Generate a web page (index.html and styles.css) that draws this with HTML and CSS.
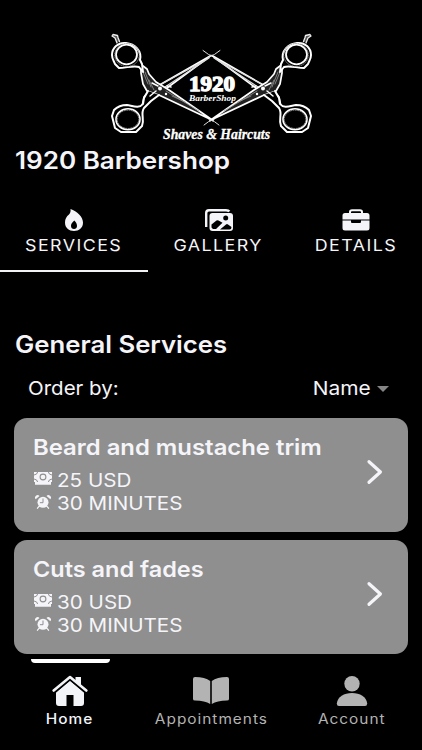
FILE: index.html
```
<!DOCTYPE html>
<html lang="en">
<head>
<meta charset="utf-8">
<meta name="viewport" content="width=device-width, initial-scale=1">
<title>1920 Barbershop</title>
<link rel="stylesheet" href="styles.css">
</head>
<body>
<svg class="defs" width="0" height="0" aria-hidden="true">
  <symbol id="cash" viewBox="0 0 18 13">
    <path fill="currentColor" d="M0 0h18v10H0zM1 10h16v2.800H1z"/>
    <g fill="none" stroke="#8f8f8f"><path d="M3.600 0Q3.300 2.600 0 3M14.400 0Q14.700 2.600 18 3M3.600 10Q3.300 7.400 0 7M14.400 10Q14.700 7.400 18 7" stroke-width="1"/><circle cx="9" cy="5" r="2.900" stroke-width="1.100"/></g>
  </symbol>
  <symbol id="clock" viewBox="0 0 16 14">
    <circle cx="8" cy="7.300" r="5.500" fill="currentColor"/>
    <path d="M.6 4.200A2.300 2.300 0 0 1 4.500 1.100zM15.400 4.200A2.300 2.300 0 0 0 11.500 1.100z" fill="currentColor"/>
    <path d="M4.200 11.200l-1.700 2M11.800 11.200l1.700 2" stroke="currentColor" stroke-width="1.300" stroke-linecap="round"/>
    <path d="M8 3.500v4.200H4.900" fill="none" stroke="#8f8f8f" stroke-width="1"/>
  </symbol>
  <symbol id="chevron" viewBox="0 0 16 24">
    <path d="M2.500 2.500 13 12 2.500 21.500" fill="none" stroke="currentColor" stroke-width="3" stroke-linecap="round" stroke-linejoin="round"/>
  </symbol>
</svg>

<header class="header">
  <svg class="logo" viewBox="100 25 223 120" role="img" aria-label="1920 Barber Shop">
    <defs>
      <g id="scissors" stroke-linejoin="round" stroke-linecap="round">
        <path d="M117 43l-2-5-3-2 1-1.500 4.500 1 .5 2 1.500 4" fill="#555" stroke="#eee" stroke-width="1.300"/>
        <path d="M144 97 149 91 211 55.500 152 99 145 105 141 111Z" fill="#000" stroke="#fff" stroke-width="1.600"/>
        <path d="M151 91 160 85 209 58 165 87" fill="none" stroke="#ddd" stroke-width="1.200"/>
        <path d="M141 64.500 147 69 149 74 156 82 169 90 213 120.500 160 95.500 147 91 143 84 141 73Z" fill="#222" stroke="#fff" stroke-width="1.700"/>
        <path d="M143 72l5 12M145 72l6 15M149 80l5 10M166 91l33 20M172 96l13 6" stroke="#999" stroke-width=".8"/>
        <path d="M126 43c-8-1-14 5-14 12 0 4 2 6 3 9l4 4c7 0 15-3 20-1l4 5-1-8-2-4c2-9-5-16-14-17z" fill="#000" stroke="#fff" stroke-width="2"/>
        <ellipse cx="126.500" cy="54.500" rx="10.500" ry="9.800" fill="#000" stroke="#fff" stroke-width="1.800"/>
        <ellipse cx="127" cy="55" rx="12.300" ry="11.500" fill="none" stroke="#999" stroke-width=".9" stroke-dasharray="1 1.400"/>
        <path d="M148 91 144 98 143 104C139 109 133 106 127 105c-6 0-10 2-13 5l-2 6 3 12 6 4h15l6-6c3-7-2-12 2-18l7-7 8-6" fill="#000" stroke="#fff" stroke-width="2"/>
        <ellipse cx="128" cy="119.300" rx="12" ry="10.500" fill="none" stroke="#fff" stroke-width="1.600"/>
        <ellipse cx="128" cy="119.300" rx="10.800" ry="9.200" fill="none" stroke="#aaa" stroke-width=".9" stroke-dasharray="1 1.400"/>
        <path d="M203 50.500Q208 55 215 57.500M204 125Q208 121 214 119.500" fill="none" stroke="#ddd" stroke-width="1"/>
        <circle cx="160" cy="88.500" r="2" fill="#fff"/><circle cx="166" cy="94" r="1.200" fill="#fff"/>
        <path d="M152 83l6 3M167 86l4 1M156 91l-6 5" stroke="#fff" stroke-width="1.500"/>
      </g>
    </defs>
    <use href="#scissors"/>
    <use href="#scissors" transform="translate(423 0) scale(-1 1)"/>
    <text class="logo-year" x="189" y="91" textLength="46" lengthAdjust="spacingAndGlyphs">1920</text>
    <text class="logo-shop" x="189" y="100.500" textLength="47" lengthAdjust="spacingAndGlyphs">BarberShop</text>
    <text class="logo-tag" x="163" y="138.500" textLength="107" lengthAdjust="spacingAndGlyphs">Shaves &amp; Haircuts</text>
  </svg>
  <h1 class="title">1920 Barbershop</h1>
</header>

<nav class="tabs">
  <a class="tab tab-active">
    <svg width="18" height="22" viewBox="0 0 18 22"><path fill="currentColor" fill-rule="evenodd" d="M5.500 0C12 2 18 8 18 13.500 18 19 14 22 9 22S0 19 0 13.500C0 10 1.500 7.500 4 5.500 5.500 4 5.800 2 5.500 0zM9.300 11.500C7 13.500 6 15 6 17c0 2 1.300 3 3 3s3-1 3-3c0-2-1-4-2.700-5.500z"/></svg>
    <span class="tab-label">SERVICES</span>
  </a>
  <a class="tab">
    <svg width="28" height="22" viewBox="0 0 28 22"><path d="M1.200 18V4Q1.200 1.200 4 1.200H21Q23.500 1.200 24.300 2.500" fill="none" stroke="currentColor" stroke-width="2.400"/><rect x="4.500" y="4" width="23.500" height="18" rx="3" fill="currentColor"/><path d="M6.500 18.500v-3l5-4q1-.7 2 0l4 2.300-6.500 6.200H8zM15 20.500l6-5q1-.8 2 0l3.500 2.500q0 2.500-2 2.500z" fill="#000"/><circle cx="20.700" cy="9" r="2.500" fill="#000"/></svg>
    <span class="tab-label">GALLERY</span>
  </a>
  <a class="tab">
    <svg width="28" height="22" viewBox="0 0 28 22"><path d="M8 5V3q0-1.700 2-1.700h8q2 0 2 1.700v2" fill="none" stroke="currentColor" stroke-width="2"/><path d="M3 4h22q2.500 0 2.500 2.500v4H.5v-4Q.5 4 3 4zM.5 11.500H9V13q0 1 1 1h8q1 0 1-1v-1.500h8.500V19q0 2.500-2.500 2.500H3Q.5 21.500.5 19z" fill="currentColor"/></svg>
    <span class="tab-label">DETAILS</span>
  </a>
</nav>

<main class="content">
  <h2 class="section-title">General Services</h2>
  <div class="order">
    <span class="order-label">Order by:</span>
    <span class="order-value"><span class="order-name">Name</span><i class="caret"></i></span>
  </div>
  <article class="card">
    <div>
      <h3 class="card-title">Beard and mustache trim</h3>
      <p class="meta"><svg class="cash"><use href="#cash"/></svg><span class="meta-text">25 USD</span></p>
      <p class="meta"><svg class="clock"><use href="#clock"/></svg><span class="meta-text">30 MINUTES</span></p>
    </div>
    <svg class="chevron"><use href="#chevron"/></svg>
  </article>
  <article class="card">
    <div>
      <h3 class="card-title card-title-short">Cuts and fades</h3>
      <p class="meta"><svg class="cash"><use href="#cash"/></svg><span class="meta-text">30 USD</span></p>
      <p class="meta"><svg class="clock"><use href="#clock"/></svg><span class="meta-text">30 MINUTES</span></p>
    </div>
    <svg class="chevron"><use href="#chevron"/></svg>
  </article>
</main>

<nav class="bottom">
  <a class="item item-active">
    <svg width="36" height="32" viewBox="0 0 36 32"><path d="M23.500 2h5.500v10l-5.500-5z" fill="currentColor"/><path d="M18 5.500 32 17.500V28q0 3-3 3h-7.500V20h-7v11H7q-3 0-3-3V17.500z" fill="currentColor"/><path d="M3.500 17 18 5 32.500 17" fill="none" stroke="#000" stroke-width="1.300"/><path d="M1.700 15.500 18 2 34.300 15.500" fill="none" stroke="currentColor" stroke-width="2.600" stroke-linecap="round" stroke-linejoin="round"/></svg>
    <span class="item-label">Home</span>
  </a>
  <a class="item">
    <svg width="36" height="32" viewBox="0 0 36 32"><path fill="currentColor" d="M17.200 6v23Q12 25.500 2 25.500 0 25.500 0 24V4q0-2 2-2 10 0 15.200 4zM18.800 6v23Q24 25.500 34 25.500q2 0 2-1.500V4q0-2-2-2-10 0-15.200 4z"/></svg>
    <span class="item-label">Appointments</span>
  </a>
  <a class="item">
    <svg width="32" height="32" viewBox="0 0 32 32"><circle cx="16" cy="8.800" r="7.700" fill="currentColor"/><path fill="currentColor" d="M3 31Q.8 31 .8 28.500C1.500 22 8 18 16 18s14.500 4 15.200 10.500q0 2.500-2.200 2.500z"/></svg>
    <span class="item-label">Account</span>
  </a>
</nav>
</body>
</html>
```
FILE: styles.css
```
* { box-sizing: border-box; }
body {
  margin: 0;
  width: 422px;
  height: 750px;
  overflow: hidden;
  background: #000;
  color: #f5f5f9;
  font-family: Inter, Roboto, sans-serif;
  display: flex;
  flex-direction: column;
}
h1, h2, h3, p { margin: 0; }
svg { display: block; flex: none; }
.defs { position: absolute; }

.header { height: 196px; padding-top: 25px; }
.logo { width: 223px; height: 120px; margin-left: 100px; }
.logo text { fill: #fff; }
.logo-year { font: 900 21px/1 "Liberation Serif", serif; stroke: #fff; stroke-width: 1.3px; }
.logo-shop { font: italic 700 8.5px/1 "Liberation Serif", serif; }
.logo-tag { font: italic 700 14px/1 "Liberation Serif", serif; stroke: #fff; stroke-width: .3px; }
.title {
  width: fit-content;
  margin: 1px 0 0 15px;
  font-size: 24px;
  line-height: 30px;
  font-weight: 600;
  transform: scaleX(1.086);
  transform-origin: left;
}

.tabs { display: flex; height: 76px; }
.tab {
  width: 148px;
  padding-top: 13px;
  display: flex;
  flex-direction: column;
  align-items: center;
  border-bottom: 2px solid transparent;
}
.tab:nth-child(2) { width: 141px; }
.tab:nth-child(3) { width: 133px; }
.tab-active { border-color: #f2f2f5; }
.tab-label {
  margin-top: 4px;
  font-size: 16px;
  line-height: 20px;
  letter-spacing: 1.3px;
  white-space: nowrap;
  transform: scaleX(1.115);
}

.content { height: 387px; padding: 58px 14px 0; }
.section-title {
  width: fit-content;
  margin-left: 1px;
  font-size: 24px;
  line-height: 30px;
  font-weight: 600;
  transform: scaleX(1.072);
  transform-origin: left;
}
.order {
  display: flex;
  justify-content: space-between;
  margin: 14px 19px 14px 14px;
  font-size: 19px;
  line-height: 30px;
}
.order-label { transform: scaleX(1.08); transform-origin: left; }
.order-value { display: flex; align-items: center; gap: 6px; }
.order-name { transform: scaleX(1.1); transform-origin: right; }
.caret {
  border: 6px solid transparent;
  border-top-color: #858585;
  border-bottom: 0;
}
.card {
  height: 114px;
  margin-bottom: 8px;
  padding: 14px 24px 0 20px;
  background: #8f8f8f;
  border-radius: 13px;
  display: flex;
  justify-content: space-between;
}
.card-title {
  width: fit-content;
  margin: 0 0 6px -1px;
  font-size: 22px;
  line-height: 30px;
  font-weight: 600;
  white-space: nowrap;
  transform: scaleX(1.085);
  transform-origin: left;
}
.card-title-short { transform: scaleX(1.067); }
.meta { display: flex; height: 23px; gap: 5px; font-size: 19px; line-height: 26px; white-space: nowrap; }
.meta-text { transform: scaleX(1.085); transform-origin: left; }
.cash { width: 18px; height: 13px; margin-top: 4px; }
.clock { width: 16px; height: 14px; margin: 4px 1px 0; }
.chevron { width: 18px; height: 26px; margin-top: 27px; }

.bottom { height: 91px; display: flex; }
.item {
  width: 140px;
  padding-top: 12px;
  color: #b3b3b3;
  display: flex;
  flex-direction: column;
  align-items: center;
}
.item:nth-child(2) { width: 142px; }
.item-active { color: #f3f4f8; }
.item-active::before {
  content: "";
  width: 79px;
  height: 4px;
  margin: -12px 0 8px;
  border-radius: 0 0 4px 4px;
  background: #fff;
}
.item > svg { margin-top: 4px; }
.item-label {
  margin-top: 3px;
  font-size: 14px;
  line-height: 18px;
  font-weight: 400;
  letter-spacing: .9px;
  transform: scaleX(1.1);
}
.item-active .item-label { font-weight: 500; }
```
